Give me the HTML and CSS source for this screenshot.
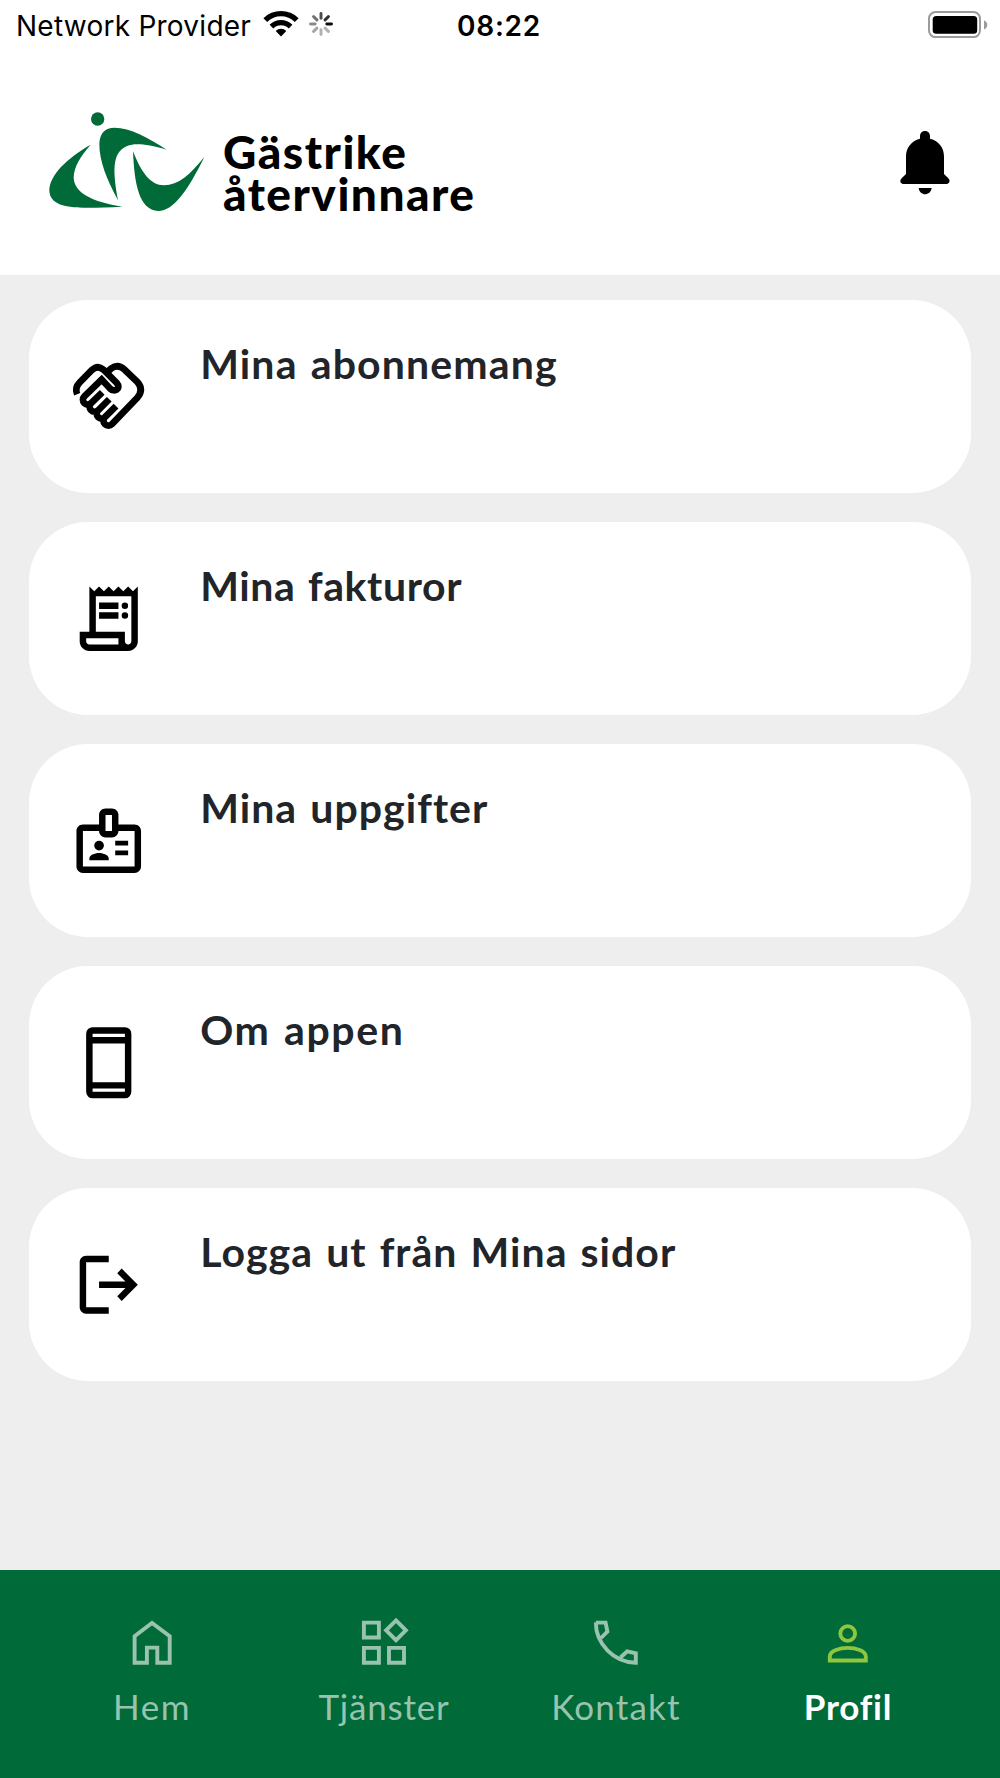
FILE: index.html
```html
<!DOCTYPE html>
<html lang="sv">
<head>
<meta charset="utf-8">
<title>Profil</title>
<link rel="stylesheet" href="styles.css">
</head>
<body>
<div class="app">
  <div class="status">
    <div class="status-side">
      <span class="carrier">Network Provider</span>
      <svg class="wifi" viewBox="0 0 36 28"><path d="M0.4 8.2A25 25 0 0 1 35.6 8.2L31.8 12A19.5 19.5 0 0 0 4.200 12Z"/><path d="M6.600 14.700A16 16 0 0 1 29.400 14.700L25.700 18.400A10.900 10.900 0 0 0 10.300 18.400Z"/><path d="M12.700 21A7.500 7.500 0 0 1 23.300 21L18 26.600Z"/></svg>
      <svg class="spinner" viewBox="-12 -12 24 24">
        <g stroke="#000" stroke-width="2.900" stroke-linecap="round">
          <path d="M5.800 0H10.500" opacity=".95"/><path d="M4.100-4.100L7.400-7.400" opacity=".8"/><path d="M0-5.800V-10.500" opacity=".7"/><path d="M-4.100-4.100L-7.400-7.400" opacity=".55"/>
          <path d="M-5.800 0H-10.500" opacity=".45"/><path d="M-4.100 4.100L-7.400 7.400" opacity=".35"/><path d="M0 5.800V10.500" opacity=".3"/><path d="M4.100 4.100L7.400 7.400" opacity=".3"/>
        </g>
      </svg>
    </div>
    <span class="time">08:22</span>
    <div class="status-side status-end">
      <svg class="battery" viewBox="0 0 60 28"><rect x="1" y="1.100" width="51" height="25" rx="6.500" fill="none" stroke="#9b9b9b" stroke-width="2"/><rect x="4.700" y="4.900" width="44.500" height="17.800" rx="3.500"/><path d="M56 9.200Q59.300 11 59.300 13.900T56 18.600Z" fill="#9b9b9b"/></svg>
    </div>
  </div>
  <header class="header">
    <div class="brand">
      <svg class="logo" viewBox="0 0 570 360"><circle cx="203" cy="57" r="20"/><path d="M182 134C110 175 58 226 58 271C60 334 156 325 277 320C188 307 131 278 131 232C132 202 150 170 182 134Z"/><path d="M264 301C230 237 208 184 208 132C209 99 226 83 253 83C302 84 353 112 410 149C350 132 316 129 291 138C243 158 250 220 264 301Z"/><path d="M309 154C334 217 361 256 402 256C446 255 480 224 523 171C475 269 431 333 385 333C326 331 313 248 309 154Z"/></svg>
      <div class="brand-name"><div class="brand-a">Gästrike</div><div class="brand-b">återvinnare</div></div>
    </div>
    <svg class="bell" viewBox="0 0 270 270"><path d="M120 56V49C120 28 150 28 150 49V56C178 63 192 84 192 110V162L205 175C212 182 208 192 200 192H70C61 192 58 182 65 175L78 162V110C78 84 93 63 120 56ZM116 204H155C152 229 119 229 116 204Z"/></svg>
  </header>
  <main class="list">
    <a class="card">
      <svg class="icon" viewBox="5.250 5.250 77.500 77.500" fill="none" stroke="#000" stroke-width="6.700">
        <path d="M12.400 42.500C10.500 38 11.500 34.200 15 30.700L27.200 18.200Q33 12.800 38.800 18L52 31.200C57 37 49.500 40.800 45.500 37L36.900 27.800L19.600 44.600A4.800 4.800 0 0 0 26.400 51.400L37.500 40.600"/>
        <path d="M26.400 51.400A4.800 4.800 0 0 0 33.400 58.600L44.500 47.500M33.400 58.600A4.800 4.800 0 0 0 40.200 65.400L51.300 54.300M40.200 65.400A4.800 4.800 0 0 0 47.200 72.400L72.500 46Q79.500 38 72.500 30L59.400 17.500Q53 12 46.500 16.700L42.300 20.500"/>
      </svg>
      <span class="label l1">Mina abonnemang</span>
    </a>
    <a class="card">
      <svg class="icon" viewBox="0 0 24 24"><path fill-rule="evenodd" d="M19.500 3.500L18 2l-1.500 1.500L15 2l-1.500 1.500L12 2l-1.500 1.500L9 2 7.500 3.500 6 2v14H3v3c0 1.660 1.340 3 3 3h12c1.660 0 3-1.340 3-3V2l-1.500 1.500zM15 20H6c-.55 0-1-.45-1-1v-1h10v2zm4-1c0 .55-.45 1-1 1s-1-.45-1-1v-3H8V5h11v14z"/><path d="M9 7h6v2H9zM9 10h6v2H9z"/><circle cx="17" cy="8" r="1"/><circle cx="17" cy="11" r="1"/></svg>
      <span class="label l2">Mina fakturor</span>
    </a>
    <a class="card">
      <svg class="icon" viewBox="0 0 24 24"><path fill-rule="evenodd" d="M20 7h-5V4c0-1.100-.9-2-2-2h-2c-1.100 0-2 .9-2 2v3H4c-1.100 0-2 .9-2 2v11c0 1.100.9 2 2 2h16c1.100 0 2-.9 2-2V9c0-1.100-.9-2-2-2zM11 4h2v5h-2V4zm9 16H4V9h5c0 1.100.9 2 2 2h2c1.100 0 2-.9 2-2h5v11z"/><circle cx="9" cy="13.500" r="1.500"/><path d="M6 18v-.5c0-1 1.600-1.700 3-1.700s3 .7 3 1.700v.5zM14 12h4v1.500h-4zM14 15h4v1.500h-4z"/></svg>
      <span class="label l3">Mina uppgifter</span>
    </a>
    <a class="card">
      <svg class="icon" viewBox="0 0 24 24"><path fill-rule="evenodd" d="M7 1h10a2 2 0 0 1 2 2v18a2 2 0 0 1-2 2H7a2 2 0 0 1-2-2V3a2 2 0 0 1 2-2zM7 3v1h10V3zM7 6v12h10V6zM7 20v1h10v-1z"/></svg>
      <span class="label l4">Om appen</span>
    </a>
    <a class="card">
      <svg class="icon" viewBox="0 0 24 24"><path d="M12 3v2H5v14h7v2H5c-1.100 0-2-.9-2-2V5c0-1.100.9-2 2-2zM16 17l-1.375-1.450L17.175 13H9v-2h8.175l-2.550-2.550L16 7l5 5z"/></svg>
      <span class="label l5">Logga ut från Mina sidor</span>
    </a>
  </main>
  <nav class="tabs">
    <a class="tab"><svg class="tab-icon" viewBox="0 0 60 60"><path d="M12.600 50.700V24.200L30 11L47.700 24.200V50.700H35.300V35.600H24.900V50.700Z"/></svg><span class="t1">Hem</span></a>
    <a class="tab"><svg class="tab-icon" viewBox="0 0 60 60"><path d="M9.900 10.600H24.900V25.500H9.900ZM9.900 35.900H24.900V50.800H9.900ZM35 35.900H50V50.800H35ZM42 8.400L51.900 18.300L42 28.200L32.100 18.300Z"/></svg><span class="t2">Tjänster</span></a>
    <a class="tab"><svg class="tab-icon" viewBox="0 0 60 60"><path d="M9.800 10.600H19.600L21.400 19.500L15 26M34.500 45.500L41.200 39.300L49.800 41.300V50.700C28 50.500 9.800 32 9.800 10.600"/></svg><span class="t3">Kontakt</span></a>
    <a class="tab active"><svg class="tab-icon" viewBox="0 0 60 60"><circle cx="29.700" cy="21.500" r="7.400"/><path d="M11.800 48.500V44.500C11.800 38.500 22 35.900 29.800 35.900S47.800 38.500 47.800 44.500V48.500Z"/></svg><span class="t4">Profil</span></a>
  </nav>
</div>
</body>
</html>
```
FILE: styles.css
```css
* { box-sizing: border-box; }
body { margin: 0; background: #eee; font-family: Lato, sans-serif; }
svg { display: block; flex: none; }
.app { width: 1000px; height: 1778px; display: flex; flex-direction: column; overflow: hidden; }

.status { height: 50px; background: #fff; display: flex; align-items: flex-start; padding: 0 12px 0 16px; font-family: Inter, sans-serif; font-size: 28px; line-height: 52px; white-space: nowrap; }
.status-side { flex: 1; display: flex; }
.status-end { justify-content: flex-end; }
.carrier { width: 247px; letter-spacing: .25px; }
.wifi { width: 36px; height: 28px; margin-top: 10px; }
.spinner { width: 24px; height: 24px; margin: 12px 0 0 10px; }
.time { font-weight: 600; letter-spacing: .8px; margin: 0 2px 0 -4px; }
.battery { width: 60px; height: 28px; margin-top: 10.700px; }

.header { height: 225px; background: #fff; display: flex; justify-content: space-between; padding: 50px 30px 0; }
.brand { display: flex; }
.logo { width: 190px; height: 120px; fill: #006a38; }
.brand-name { font-weight: 900; font-size: 46px; line-height: 42px; letter-spacing: 1.500px; padding: 31px 0 0 3px; white-space: nowrap; }
.bell { width: 90px; height: 90px; margin-top: 20px; }

.list { flex: 1; display: flex; flex-direction: column; gap: 29.200px; padding: 24.700px 29px 0; }
.card { height: 193px; flex: none; display: flex; align-items: center; background: #fff; border-radius: 59px; padding-left: 40.700px; }
.icon { width: 77.500px; height: 77.500px; }
.label { align-self: flex-start; margin: 39px 0 0 53px; font-weight: 700; font-size: 41px; line-height: 50px; word-spacing: 2px; color: #212529; white-space: nowrap; }
.l1 { letter-spacing: 1.150px; }
.l2 { letter-spacing: .6px; }
.l3 { letter-spacing: 1.050px; }
.l4 { letter-spacing: 1.600px; }
.l5 { letter-spacing: 1.050px; }

.tabs { height: 208px; background: #006a38; display: flex; padding: 42px 36px 0; }
.tab { flex: 1; display: flex; flex-direction: column; align-items: center; font-size: 35px; line-height: 44px; color: #99c3af; white-space: nowrap; }
.tab span { margin-top: 12px; }
.t1 { letter-spacing: 1.500px; }
.t2 { letter-spacing: .8px; }
.t3 { letter-spacing: 1.200px; }
.t4 { letter-spacing: .8px; }
.tab-icon { width: 60px; height: 60px; fill: none; stroke: #99c3af; stroke-width: 3.900; }
.active { color: #fff; font-weight: 700; }
.active .tab-icon { stroke: #8dc63f; }
```
